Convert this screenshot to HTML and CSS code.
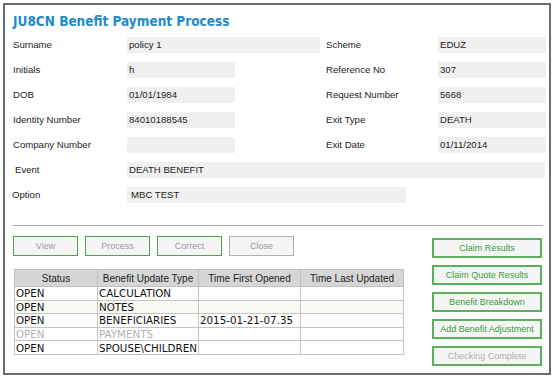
FILE: index.html
```html
<!DOCTYPE html>
<html lang="en">
<head>
  <meta charset="UTF-8" />
  <title>JU8CN Benefit Payment Process</title>
  <link rel="stylesheet" href="styles.css">
</head>
<body>
  <div class="frame">
    <h1 class="title">JU8CN Benefit Payment Process</h1>

    <div class="form">
      <div class="row">
        <span class="label">Surname</span>
        <span class="value wide">policy 1</span>
        <span class="label right">Scheme</span>
        <span class="value small">EDUZ</span>
      </div>
      <div class="row">
        <span class="label">Initials</span>
        <span class="value">h</span>
        <span class="label right">Reference No</span>
        <span class="value small">307</span>
      </div>
      <div class="row">
        <span class="label">DOB</span>
        <span class="value">01/01/1984</span>
        <span class="label right">Request Number</span>
        <span class="value small">5668</span>
      </div>
      <div class="row">
        <span class="label">Identity Number</span>
        <span class="value">84010188545</span>
        <span class="label right">Exit Type</span>
        <span class="value small">DEATH</span>
      </div>
      <div class="row">
        <span class="label">Company Number</span>
        <span class="value"></span>
        <span class="label right">Exit Date</span>
        <span class="value small">01/11/2014</span>
      </div>
      <div class="row">
        <span class="label indent">Event</span>
        <span class="value full">DEATH BENEFIT</span>
      </div>
      <div class="row">
        <span class="label outdent">Option</span>
        <span class="value option">MBC TEST</span>
      </div>
    </div>

    <hr class="divider">

    <div class="bottom">
      <div class="left">
        <div class="actions">
          <button class="btn">View</button>
          <button class="btn">Process</button>
          <button class="btn">Correct</button>
          <button class="btn off">Close</button>
        </div>

        <table class="grid">
          <thead>
            <tr>
              <th class="c1">Status</th>
              <th class="c2">Benefit Update Type</th>
              <th class="c3">Time First Opened</th>
              <th class="c4">Time Last Updated</th>
            </tr>
          </thead>
          <tbody>
            <tr><td>OPEN</td><td>CALCULATION</td><td></td><td></td></tr>
            <tr class="alt"><td>OPEN</td><td>NOTES</td><td></td><td></td></tr>
            <tr><td>OPEN</td><td>BENEFICIARIES</td><td>2015-01-21-07.35</td><td></td></tr>
            <tr class="dim"><td>OPEN</td><td>PAYMENTS</td><td></td><td></td></tr>
            <tr><td>OPEN</td><td>SPOUSE\CHILDREN</td><td></td><td></td></tr>
          </tbody>
        </table>
      </div>

      <div class="side">
        <button class="sbtn">Claim Results</button>
        <button class="sbtn">Claim Quote Results</button>
        <button class="sbtn">Benefit Breakdown</button>
        <button class="sbtn">Add Benefit Adjustment</button>
        <button class="sbtn off">Checking Complete</button>
      </div>
    </div>
  </div>
</body>
</html>
```

FILE: styles.css
```css
body {
  margin: 0;
  background: #fff;
  font-family: Tahoma, "DejaVu Sans", "Liberation Sans", sans-serif;
}

.frame {
  margin: 3px;
  width: 544px;
  height: 368px;
  border: 2px solid #6b6b6b;
}

.title {
  margin: 8px 0 0 8px;
  height: 19px;
  font-family: "DejaVu Sans Condensed", "DejaVu Sans", Verdana, sans-serif;
  font-size: 13.5px;
  font-weight: bold;
  color: #1f8ac9;
}

/* Formularfelder */
.form {
  padding-left: 8px;
}

.row {
  display: flex;
  align-items: center;
  height: 25px;
  font-family: "Liberation Sans", Arial, sans-serif;
  font-size: 9.6px;
  color: #222;
}

.label {
  width: 114px;
  flex: none;
}

.label.indent { padding-left: 2px; width: 112px; }
.label.outdent { margin-left: -1px; width: 115px; }

.label.right {
  width: 112px;
}

.value {
  flex: none;
  width: 108px;
  height: 16px;
  line-height: 16px;
  padding-left: 2px;
  box-sizing: border-box;
  background: #f0f0f0;
  margin-right: 91px;
}

.value.wide { width: 193px; margin-right: 6px; }
.value.small { width: 108px; margin-right: 0; }
.value.full { width: 418px; margin-right: 0; }
.value.option { width: 279px; margin-right: 0; padding-left: 4px; }

.divider {
  border: 0;
  border-top: 1px solid #a9a9a9;
  margin: 18px 6px 0 8px;
}

/* Unterer Bereich */
.bottom {
  display: flex;
  padding-left: 8px;
}

.left {
  width: 391px;
}

.actions {
  display: flex;
  gap: 7px;
  margin-top: 10px;
}

.btn {
  width: 65px;
  height: 20px;
  padding: 0;
  border: 1px solid #4aa54a;
  background: #f5f5f5;
  font-family: "Liberation Sans", Arial, sans-serif;
  font-size: 9px;
  color: #9a9a9a;
}

.btn.off {
  border-color: #b0b0b0;
}

.grid {
  margin-top: 13px;
  margin-left: 1px;
  border-collapse: collapse;
  border: 1px solid #b5b5b5;
  width: 390px;
}

.grid th {
  height: 16px;
  padding: 0;
  background: #d6d6d6;
  border: 1px solid #c0c0c0;
  font-family: "Liberation Sans", Arial, sans-serif;
  font-size: 10px;
  font-weight: normal;
  color: #222;
}

.grid .c1 { width: 82px; }
.grid .c2 { width: 100px; }
.grid .c3 { width: 101px; }

.grid td {
  height: 12.6px;
  padding: 0 0 0 1px;
  border: 1px solid #c4c4c4;
  font-family: "DejaVu Sans", Verdana, sans-serif;
  font-size: 10.3px;
  line-height: 12px;
  color: #111;
  white-space: nowrap;
}

.grid tr.alt td { background: #fafaf4; }
.grid tr.dim td { color: #b0b0b0; }

.side {
  display: flex;
  flex-direction: column;
  gap: 7px;
  margin-left: 28px;
  margin-top: 12px;
}

.sbtn {
  width: 110px;
  height: 20px;
  padding: 0;
  border: 2px solid #5cb05c;
  background: #f5f5f5;
  font-family: "Liberation Sans", Arial, sans-serif;
  font-size: 9px;
  color: #3a9a3a;
}

.sbtn.off {
  color: #b0b0b0;
}
```
